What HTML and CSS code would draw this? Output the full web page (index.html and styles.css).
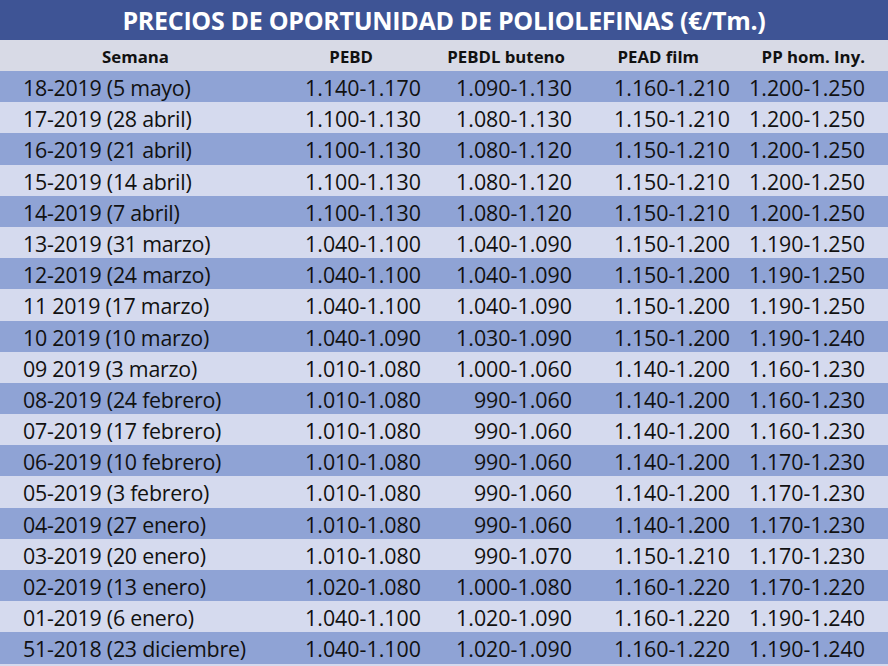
FILE: index.html
```html
<!DOCTYPE html>
<html lang="es">
<head>
<meta charset="utf-8">
<title>Precios de oportunidad de poliolefinas</title>
<link rel="stylesheet" href="styles.css">
</head>
<body>
<div class="sheet">
  <div class="title">PRECIOS DE OPORTUNIDAD DE POLIOLEFINAS (€/Tm.)</div>
  <div class="row head">
    <div class="c c1 h-sem">Semana</div>
    <div class="c c2 h-pebd">PEBD</div>
    <div class="c c3 h-pebdl">PEBDL buteno</div>
    <div class="c c4 h-pead">PEAD film</div>
    <div class="c c5 h-pp">PP hom. Iny.</div>
  </div>
  <div class="row dark"><div class="c c1">18-2019 (5 mayo)</div><div class="c c2">1.140-1.170</div><div class="c c3">1.090-1.130</div><div class="c c4">1.160-1.210</div><div class="c c5">1.200-1.250</div></div>
  <div class="row light"><div class="c c1">17-2019 (28 abril)</div><div class="c c2">1.100-1.130</div><div class="c c3">1.080-1.130</div><div class="c c4">1.150-1.210</div><div class="c c5">1.200-1.250</div></div>
  <div class="row dark"><div class="c c1">16-2019 (21 abril)</div><div class="c c2">1.100-1.130</div><div class="c c3">1.080-1.120</div><div class="c c4">1.150-1.210</div><div class="c c5">1.200-1.250</div></div>
  <div class="row light"><div class="c c1">15-2019 (14 abril)</div><div class="c c2">1.100-1.130</div><div class="c c3">1.080-1.120</div><div class="c c4">1.150-1.210</div><div class="c c5">1.200-1.250</div></div>
  <div class="row dark"><div class="c c1">14-2019 (7 abril)</div><div class="c c2">1.100-1.130</div><div class="c c3">1.080-1.120</div><div class="c c4">1.150-1.210</div><div class="c c5">1.200-1.250</div></div>
  <div class="row light"><div class="c c1">13-2019 (31 marzo)</div><div class="c c2">1.040-1.100</div><div class="c c3">1.040-1.090</div><div class="c c4">1.150-1.200</div><div class="c c5">1.190-1.250</div></div>
  <div class="row dark"><div class="c c1">12-2019 (24 marzo)</div><div class="c c2">1.040-1.100</div><div class="c c3">1.040-1.090</div><div class="c c4">1.150-1.200</div><div class="c c5">1.190-1.250</div></div>
  <div class="row light"><div class="c c1">11 2019 (17 marzo)</div><div class="c c2">1.040-1.100</div><div class="c c3">1.040-1.090</div><div class="c c4">1.150-1.200</div><div class="c c5">1.190-1.250</div></div>
  <div class="row dark"><div class="c c1">10 2019 (10 marzo)</div><div class="c c2">1.040-1.090</div><div class="c c3">1.030-1.090</div><div class="c c4">1.150-1.200</div><div class="c c5">1.190-1.240</div></div>
  <div class="row light"><div class="c c1">09 2019 (3 marzo)</div><div class="c c2">1.010-1.080</div><div class="c c3">1.000-1.060</div><div class="c c4">1.140-1.200</div><div class="c c5">1.160-1.230</div></div>
  <div class="row dark"><div class="c c1">08-2019 (24 febrero)</div><div class="c c2">1.010-1.080</div><div class="c c3">990-1.060</div><div class="c c4">1.140-1.200</div><div class="c c5">1.160-1.230</div></div>
  <div class="row light"><div class="c c1">07-2019 (17 febrero)</div><div class="c c2">1.010-1.080</div><div class="c c3">990-1.060</div><div class="c c4">1.140-1.200</div><div class="c c5">1.160-1.230</div></div>
  <div class="row dark"><div class="c c1">06-2019 (10 febrero)</div><div class="c c2">1.010-1.080</div><div class="c c3">990-1.060</div><div class="c c4">1.140-1.200</div><div class="c c5">1.170-1.230</div></div>
  <div class="row light"><div class="c c1">05-2019 (3 febrero)</div><div class="c c2">1.010-1.080</div><div class="c c3">990-1.060</div><div class="c c4">1.140-1.200</div><div class="c c5">1.170-1.230</div></div>
  <div class="row dark"><div class="c c1">04-2019 (27 enero)</div><div class="c c2">1.010-1.080</div><div class="c c3">990-1.060</div><div class="c c4">1.140-1.200</div><div class="c c5">1.170-1.230</div></div>
  <div class="row light"><div class="c c1">03-2019 (20 enero)</div><div class="c c2">1.010-1.080</div><div class="c c3">990-1.070</div><div class="c c4">1.150-1.210</div><div class="c c5">1.170-1.230</div></div>
  <div class="row dark"><div class="c c1">02-2019 (13 enero)</div><div class="c c2">1.020-1.080</div><div class="c c3">1.000-1.080</div><div class="c c4">1.160-1.220</div><div class="c c5">1.170-1.220</div></div>
  <div class="row light"><div class="c c1">01-2019 (6 enero)</div><div class="c c2">1.040-1.100</div><div class="c c3">1.020-1.090</div><div class="c c4">1.160-1.220</div><div class="c c5">1.190-1.240</div></div>
  <div class="row dark"><div class="c c1">51-2018 (23 diciembre)</div><div class="c c2">1.040-1.100</div><div class="c c3">1.020-1.090</div><div class="c c4">1.160-1.220</div><div class="c c5">1.190-1.240</div></div>
</div>
</body>
</html>
```
FILE: styles.css
```css
html, body {
  margin: 0;
  padding: 0;
  background: #d5daee;
}
body {
  font-family: "Open Sans", "Liberation Sans", sans-serif;
  color: #111;
}
.sheet {
  width: 888px;
  height: 666px;
  overflow: hidden;
  display: flex;
  flex-direction: column;
}
.title {
  height: 40px;
  background: #3e5495;
  color: #fff;
  font-weight: 700;
  font-size: 25px;
  line-height: 40px;
  text-align: center;
  letter-spacing: -0.3px;
}
.row {
  display: grid;
  grid-template-columns: 280px 153px 151px 158px 146px;
  height: 31.2px;
  align-items: start;
  font-size: 21.4px;
  white-space: nowrap;
}
.row.head {
  height: 31px;
  background: #d8dae6;
  font-weight: 700;
  font-size: 16.8px;
}
.row.dark { background: #8fa3d5; }
.row.light { background: #d5daee; }
.c {
  text-align: right;
  padding-right: 12px;
  padding-top: 2px;
  line-height: 29px;
}
.head .c {
  padding-top: 3px;
  line-height: 28px;
}
.c1 {
  text-align: left;
  padding-left: 23px;
  padding-right: 0;
  letter-spacing: -0.25px;
}
.c5 { padding-right: 23px; }
.head .h-sem { padding-left: 102px; letter-spacing: 0; }
.head .h-pebd { padding-right: 60px; }
.head .h-pebdl { padding-right: 19px; }
.head .h-pead { padding-right: 43px; }
.head .h-pp { padding-right: 23px; }
```
